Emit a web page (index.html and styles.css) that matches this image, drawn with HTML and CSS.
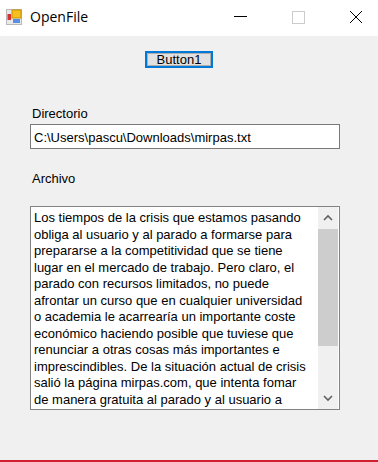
FILE: index.html
```html
<!DOCTYPE html>
<html lang="es">
<head>
<meta charset="UTF-8">
<meta name="viewport" content="width=device-width, initial-scale=1.0">
<title>OpenFile</title>
<link rel="stylesheet" href="styles.css">
</head>
<body>
<div class="window">
    <div class="titlebar">
        <svg class="app-icon" width="16" height="16" viewBox="0 0 16 16">
            <rect x="0.5" y="0.5" width="15" height="15" fill="#e8e8e8" stroke="#b8b8b8"/>
            <rect x="6" y="1" width="9" height="8" fill="#f4c020" stroke="#c89000"/>
            <rect x="1.5" y="5" width="3.5" height="6" fill="#d83030"/>
            <rect x="7" y="10" width="7" height="4" fill="#5a8ee0"/>
        </svg>
        <span class="title">OpenFile</span>
        <div class="controls">
            <svg class="ctl" width="46" height="36" viewBox="0 0 46 36"><path d="M17 16.5h13" stroke="#000" stroke-width="1"/></svg>
            <svg class="ctl" width="46" height="36" viewBox="0 0 46 36"><rect x="17.5" y="11.5" width="12" height="12" fill="none" stroke="#ccc"/></svg>
            <svg class="ctl" width="46" height="36" viewBox="0 0 46 36"><path d="M17 11l12 12M29 11l-12 12" stroke="#000" stroke-width="1"/></svg>
        </div>
    </div>

    <div class="content">
        <button class="btn">Button1</button>

        <label class="lbl lbl-dir">Directorio</label>
        <div class="textbox">C:\Users\pascu\Downloads\mirpas.txt</div>

        <label class="lbl lbl-file">Archivo</label>
        <div class="memo">
            <div class="memo-text">
                Los tiempos de la crisis que estamos pasando<br>
                obliga al usuario y al parado a formarse para<br>
                prepararse a la competitividad que se tiene<br>
                lugar en el mercado de trabajo. Pero claro, el<br>
                parado con recursos limitados, no puede<br>
                afrontar un curso que en cualquier universidad<br>
                o academia le acarrearía un importante coste<br>
                económico haciendo posible que tuviese que<br>
                renunciar a otras cosas más importantes e<br>
                imprescindibles. De la situación actual de crisis<br>
                salió la página mirpas.com, que intenta fomar<br>
                de manera gratuita al parado y al usuario a
            </div>
            <div class="scrollbar">
                <svg class="arrow" width="20" height="22" viewBox="0 0 20 22"><path d="M6 13l4-4 4 4" fill="none" stroke="#606060" stroke-width="1.6"/></svg>
                <div class="thumb"></div>
                <div class="track"></div>
                <svg class="arrow" width="20" height="22" viewBox="0 0 20 22"><path d="M6 9l4 4 4-4" fill="none" stroke="#606060" stroke-width="1.6"/></svg>
            </div>
        </div>
    </div>
    <div class="bottom-line"></div>
</div>
</body>
</html>
```

FILE: styles.css
```css
body {
    margin: 0;
    font-family: "Liberation Sans", Arial, sans-serif;
    background-color: #f0f0f0;
}
.window {
    width: 378px;
    height: 462px;
    display: flex;
    flex-direction: column;
    background-color: #f0f0f0;
}
.titlebar {
    height: 36px;
    background-color: #fff;
    display: flex;
    align-items: center;
}
.app-icon {
    margin-left: 6px;
    margin-top: -2px;
}
.title {
    margin-left: 8px;
    font-family: "Open Sans", "Noto Sans", sans-serif;
    font-size: 14px;
    color: #000;
    margin-top: -3px;
}
.controls {
    margin-left: auto;
    display: flex;
    margin-right: -1px;
}
.ctl {
    display: block;
    margin-left: 12px;
}
.ctl:first-child {
    margin-left: 0;
}
.content {
    flex: 1;
    padding-left: 30px;
    font-size: 13px;
    color: #000;
}
.btn {
    display: block;
    margin: 15px 0 0 115px;
    width: 68px;
    height: 17px;
    padding: 0;
    font-family: "Liberation Sans", Arial, sans-serif;
    font-size: 13px;
    line-height: 13px;
    background-color: #e1e1e1;
    border: 2px solid #0078d7;
    box-shadow: inset 0 0 0 1px #adadad;
    color: #000;
}
.lbl {
    display: block;
    margin-left: 2px;
    line-height: 16px;
}
.lbl-dir {
    margin-top: 38px;
}
.lbl-file {
    margin-top: 22px;
}
.textbox {
    margin-top: 2px;
    width: 305px;
    height: 23px;
    border: 1px solid #7a7a7a;
    background-color: #fff;
    padding-left: 3px;
    line-height: 25px;
    white-space: nowrap;
}
.memo {
    margin-top: 19px;
    width: 308px;
    height: 202px;
    border: 1px solid #828282;
    background-color: #fff;
    display: flex;
    overflow: hidden;
}
.memo-text {
    flex: 1;
    padding: 3px 0 0 3px;
    line-height: 16.5px;
    white-space: nowrap;
    overflow: hidden;
}
.scrollbar {
    width: 20px;
    margin-right: 1px;
    background-color: #f0f0f0;
    display: flex;
    flex-direction: column;
}
.arrow {
    display: block;
}
.thumb {
    height: 117px;
    background-color: #cdcdcd;
}
.track {
    flex: 1;
}
.bottom-line {
    height: 2px;
    background-color: #d0202f;
}
```
